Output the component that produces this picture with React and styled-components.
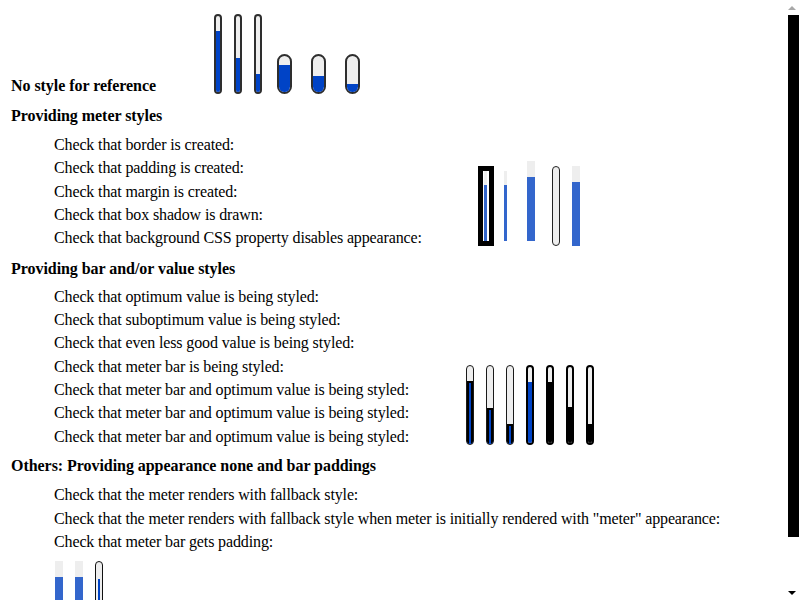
import React from 'react';
import styled, { createGlobalStyle } from 'styled-components';

const GlobalStyle = createGlobalStyle`
  html { background: #fff; }
  body {
    margin: 0;
    font-family: "Liberation Serif", "Times New Roman", serif;
    font-size: 16px;
    color: #000;
  }
`;

const Page = styled.div`
  padding: 0 15px 14px 11px;
`;

const TopRow = styled.div`
  display: flex;
  align-items: flex-end;
  padding-top: 14px;
`;

const Heading = styled.div`
  font-weight: bold;
  line-height: 23.25px;
  letter-spacing: -0.05px;
  white-space: nowrap;
  flex-shrink: 0;
  margin-top: ${p => p.$mt || 0}px;
  width: ${p => (p.$w ? `${p.$w}px` : 'auto')};
`;

const Section = styled.div`
  display: flex;
  align-items: flex-end;
  margin-top: ${p => p.$mt || 0}px;
`;

const List = styled.div`
  display: flex;
  flex-direction: column;
  flex-shrink: 0;
  margin-left: 43px;
  width: ${p => (p.$w ? `${p.$w}px` : 'auto')};
`;

const Row = styled.div`
  line-height: 23.28px;
  letter-spacing: -0.13px;
  white-space: nowrap;
`;

const MeterGroup = styled.div`
  display: flex;
  align-items: flex-end;
  flex-shrink: 0;
  margin-bottom: ${p => p.$mb || 0}px;
  margin-left: ${p => p.$ml || 0}px;
  margin-top: ${p => p.$mt || 0}px;
`;

const Track = styled.div`
  flex-shrink: 0;
  box-sizing: border-box;
  display: flex;
  flex-direction: column;
  justify-content: flex-end;
  width: ${p => p.$w}px;
  height: ${p => p.$h}px;
  margin-left: ${p => p.$ml || 0}px;
  margin-bottom: ${p => p.$mb || 0}px;
  border: ${p => p.$bw || 0}px solid ${p => p.$bc || 'transparent'};
  border-radius: ${p => (p.$round ? '999px' : '0')};
  background: ${p => p.$bg || '#eeeeee'};
  overflow: hidden;
`;

const Fill = styled.div`
  flex-shrink: 0;
  box-sizing: border-box;
  align-self: ${p => (p.$fw ? 'center' : 'stretch')};
  width: ${p => (p.$fw ? `${p.$fw}px` : 'auto')};
  background: ${p => p.$color};
  border: ${p => (p.$rim ? '2px solid #000' : 'none')};
  border-bottom: none;
`;

const BoxMeter = styled.div`
  flex-shrink: 0;
  box-sizing: border-box;
  display: flex;
  width: 16px;
  height: 80px;
  padding-left: 1px;
  margin-left: ${p => p.$ml || 0}px;
  border: 5px solid ${p => p.$bc};
  background: #fff;
`;

/* Window scrollbar drawn over the right edge of the page */
const Scrollbar = styled.div`
  position: fixed;
  top: 0;
  right: 0;
  width: 15px;
  height: 100vh;
  background: #fff;
  display: flex;
  flex-direction: column;
  align-items: center;
`;

const ScrollButton = styled.div`
  flex-shrink: 0;
  width: 15px;
  height: 15px;
  display: flex;
  align-items: center;
  justify-content: center;
`;

const Arrow = styled.div`
  width: 0;
  height: 0;
  margin-left: -1px;
  border-left: 4px solid transparent;
  border-right: 4px solid transparent;
  ${p =>
    p.$down
      ? `border-top: 4px solid ${p.$color};`
      : `border-bottom: 4px solid ${p.$color};`}
`;

const ScrollTrack = styled.div`
  flex: 1;
  width: 15px;
  display: flex;
  justify-content: center;
`;

const Thumb = styled.div`
  width: 11px;
  height: 522px;
  margin-left: 1px;
  background: #000;
`;

const NATIVE_BLUE = '#0043c6';
const CSS_BLUE = '#3366cc';

function Meter({ w = 8, h = 80, fill = 0, color = NATIVE_BLUE, fw, rim, ...rest }) {
  return (
    <Track $w={w} $h={h} {...rest}>
      {fill > 0 && <Fill style={{ height: `${fill}px` }} $color={color} $fw={fw} $rim={rim} />}
    </Track>
  );
}

const nativeMeters = [
  { w: 8, h: 80, fill: 61, ml: 0 },
  { w: 8, h: 80, fill: 34, ml: 12 },
  { w: 8, h: 80, fill: 18, ml: 12 },
  { w: 15, h: 40, fill: 27, ml: 15 },
  { w: 15, h: 40, fill: 16, ml: 19 },
  { w: 15, h: 40, fill: 8, ml: 19 },
];

const section2Rows = [
  'Check that border is created:',
  'Check that padding is created:',
  'Check that margin is created:',
  'Check that box shadow is drawn:',
  'Check that background CSS property disables appearance:',
];

const section3Rows = [
  'Check that optimum value is being styled:',
  'Check that suboptimum value is being styled:',
  'Check that even less good value is being styled:',
  'Check that meter bar is being styled:',
  'Check that meter bar and optimum value is being styled:',
  'Check that meter bar and optimum value is being styled:',
  'Check that meter bar and optimum value is being styled:',
];

const section3Meters = [
  { bw: 1, bc: '#1a1a1a', fill: 63, color: NATIVE_BLUE, rim: true },
  { bw: 1, bc: '#1a1a1a', fill: 36, color: NATIVE_BLUE, rim: true },
  { bw: 1, bc: '#1a1a1a', fill: 20, color: NATIVE_BLUE, rim: true },
  { bw: 2, bc: '#000', fill: 61, color: NATIVE_BLUE },
  { bw: 2, bc: '#000', fill: 61, color: '#000' },
  { bw: 2, bc: '#000', fill: 36, color: '#000' },
  { bw: 2, bc: '#000', fill: 19, color: '#000' },
];

const section4Rows = [
  'Check that the meter renders with fallback style:',
  'Check that the meter renders with fallback style when meter is initially rendered with "meter" appearance:',
  'Check that meter bar gets padding:',
];

export default function App() {
  return (
    <>
      <GlobalStyle />
      <Page>
        <TopRow>
          <Heading $w={203}>No style for reference</Heading>
          <MeterGroup $mb={3.2}>
            {nativeMeters.map((m, i) => (
              <Meter key={i} w={m.w} h={m.h} fill={m.fill} $ml={m.ml} $bw={2} $bc="#2e2e2e" $round />
            ))}
          </MeterGroup>
        </TopRow>

        <Heading $mt={6.8}>Providing meter styles</Heading>
        <Section $mt={5.75}>
          <List $w={424}>
            {section2Rows.map((t, i) => (
              <Row key={i}>{t}</Row>
            ))}
          </List>
          <MeterGroup $mb={3.2}>
            <BoxMeter $bc="#000">
              <Meter w={3} h={70} fill={56} color={CSS_BLUE} />
            </BoxMeter>
            <BoxMeter $bc="transparent" $ml={4}>
              <Meter w={3} h={70} fill={56} color={CSS_BLUE} />
            </BoxMeter>
            <Meter w={8} h={80} fill={64} color={CSS_BLUE} $ml={13} $mb={5} />
            <Meter w={8} h={80} fill={0} $ml={17} $bw={1.5} $bc="#222" $round />
            <Meter w={8} h={80} fill={64} color={CSS_BLUE} $ml={12} />
          </MeterGroup>
        </Section>

        <Heading $mt={7.25}>Providing bar and/or value styles</Heading>
        <Section $mt={4.95}>
          <List $w={412}>
            {section3Rows.map((t, i) => (
              <Row key={i}>{t}</Row>
            ))}
          </List>
          <MeterGroup $mb={3}>
            {section3Meters.map((m, i) => (
              <Meter
                key={i}
                w={8}
                h={80}
                fill={m.fill}
                color={m.color}
                rim={m.rim}
                $ml={i === 0 ? 0 : 12}
                $bw={m.bw}
                $bc={m.bc}
                $round
              />
            ))}
          </MeterGroup>
        </Section>

        <Heading $mt={6.55}>Others: Providing appearance none and bar paddings</Heading>
        <Section $mt={5.75}>
          <List>
            {section4Rows.map((t, i) => (
              <Row key={i}>{t}</Row>
            ))}
          </List>
        </Section>
        <MeterGroup $ml={44} $mt={8.2}>
          <Meter w={8} h={80} fill={64} color={CSS_BLUE} />
          <Meter w={8} h={80} fill={64} color={CSS_BLUE} $ml={12} />
          <Meter w={8} h={80} fill={61} fw={2} color={NATIVE_BLUE} $ml={12} $bw={1.5} $bc="#111" $round />
        </MeterGroup>
      </Page>
      <Scrollbar>
        <ScrollButton>
          <Arrow $color="#a8a8a8" />
        </ScrollButton>
        <ScrollTrack>
          <Thumb />
        </ScrollTrack>
        <ScrollButton>
          <Arrow $down $color="#000" />
        </ScrollButton>
      </Scrollbar>
    </>
  );
}
